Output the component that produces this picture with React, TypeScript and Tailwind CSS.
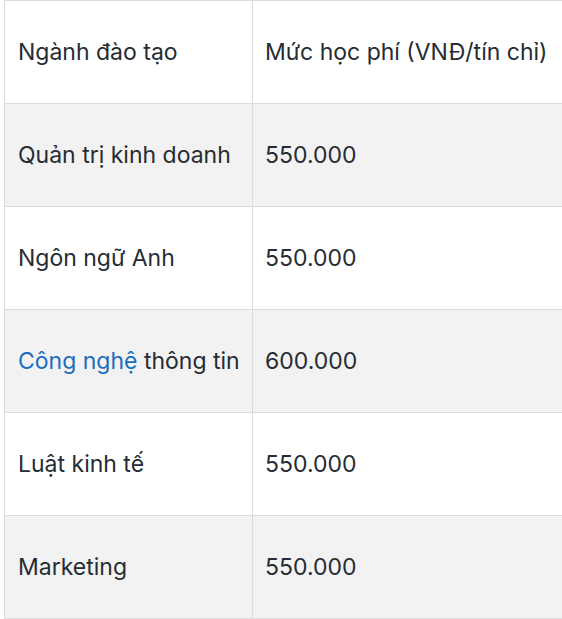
const rows: { name: React.ReactNode; fee: string }[] = [
  { name: 'Quản trị kinh doanh', fee: '550.000' },
  { name: 'Ngôn ngữ Anh', fee: '550.000' },
  {
    name: (
      <span>
        <a href="#" className="text-[#1a6dbf]">Công nghệ</a> thông tin
      </span>
    ),
    fee: '600.000',
  },
  { name: 'Luật kinh tế', fee: '550.000' },
  { name: 'Marketing', fee: '550.000' },
];

function Row({ name, fee, striped }: { name: React.ReactNode; fee: string; striped: boolean }) {
  return (
    <div className={`flex h-[103px] border-b border-[#dcdcdc] ${striped ? 'bg-[#f2f2f2]' : 'bg-white'}`}>
      <div className="w-[248px] shrink-0 flex items-center pl-[13px] border-r border-[#dcdcdc]">{name}</div>
      <div className="flex-1 flex items-center pl-[12px] whitespace-nowrap">{fee}</div>
    </div>
  );
}

export default function App() {
  return (
    <div className="w-[562px] h-[619px] bg-white overflow-hidden pl-1">
      <div
        className="border-l border-t border-[#dcdcdc] text-[23px] text-[#262c33]"
        style={{ fontFamily: 'Inter, "Noto Sans", sans-serif' }}
      >
        <Row name="Ngành đào tạo" fee="Mức học phí (VNĐ/tín chỉ)" striped={false} />
        {rows.map((r, i) => (
          <Row key={i} name={r.name} fee={r.fee} striped={i % 2 === 0} />
        ))}
      </div>
    </div>
  );
}
